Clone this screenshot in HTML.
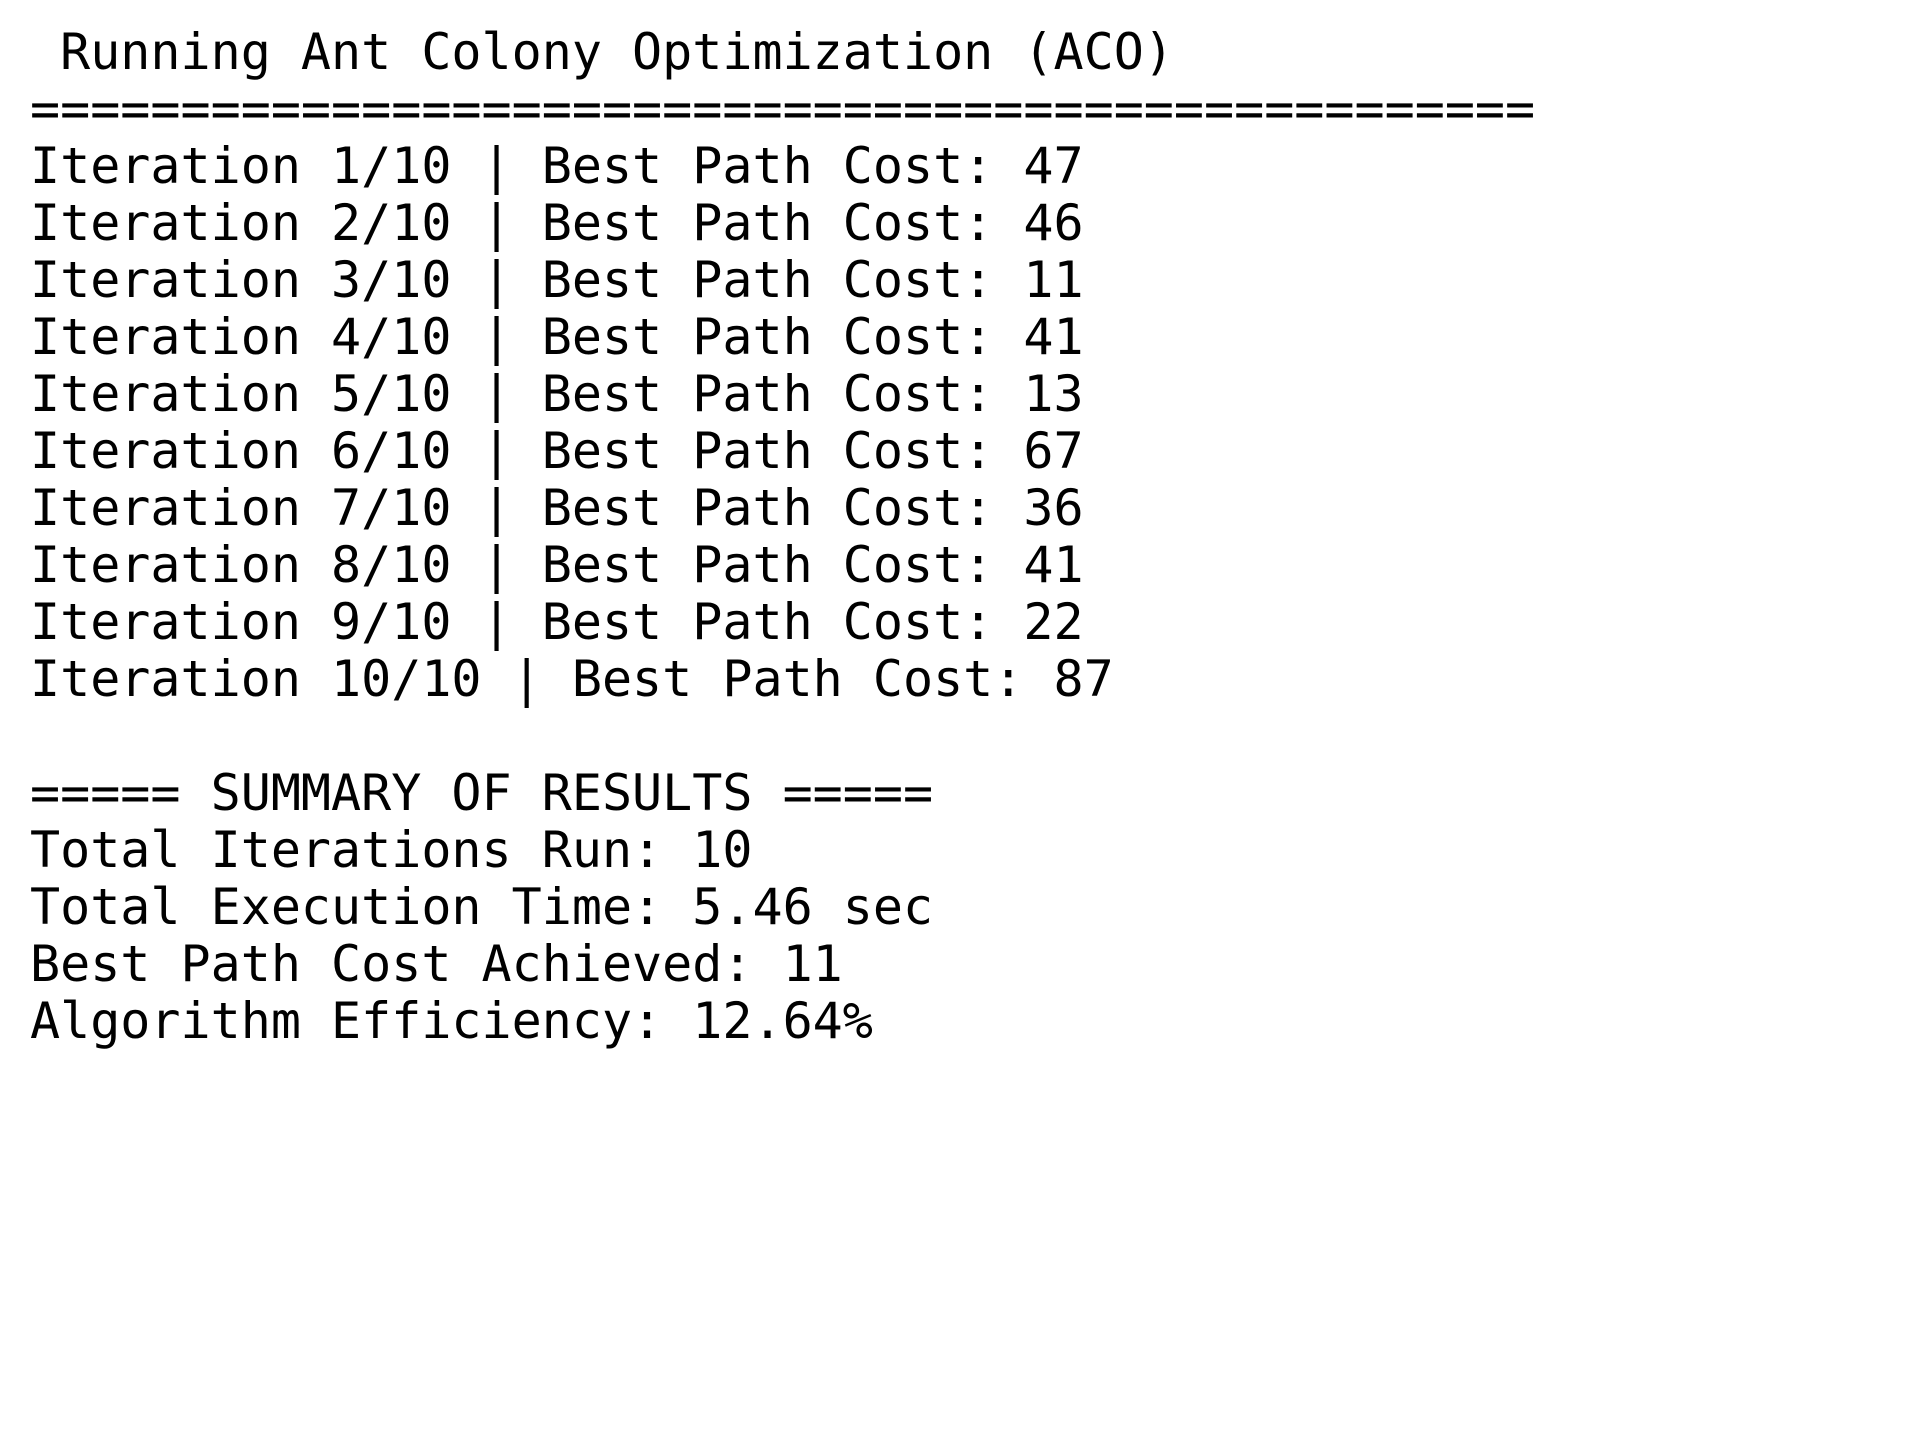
<!DOCTYPE html>
<html>
<head>
<meta charset="utf-8">
<style>
  html, body { margin: 0; padding: 0; background: #fff; }
  body { width: 1919px; height: 1446px; overflow: hidden; }
  pre {
    margin: 0;
    padding: 24px 0 0 30px;
    font-family: "DejaVu Sans Mono", "Liberation Mono", monospace;
    font-size: 50px;
    line-height: 57px;
    color: #000;
    white-space: pre;
  }
</style>
</head>
<body>
<pre> Running Ant Colony Optimization (ACO)
==================================================
Iteration 1/10 | Best Path Cost: 47
Iteration 2/10 | Best Path Cost: 46
Iteration 3/10 | Best Path Cost: 11
Iteration 4/10 | Best Path Cost: 41
Iteration 5/10 | Best Path Cost: 13
Iteration 6/10 | Best Path Cost: 67
Iteration 7/10 | Best Path Cost: 36
Iteration 8/10 | Best Path Cost: 41
Iteration 9/10 | Best Path Cost: 22
Iteration 10/10 | Best Path Cost: 87

===== SUMMARY OF RESULTS =====
Total Iterations Run: 10
Total Execution Time: 5.46 sec
Best Path Cost Achieved: 11
Algorithm Efficiency: 12.64%</pre>
</body>
</html>
